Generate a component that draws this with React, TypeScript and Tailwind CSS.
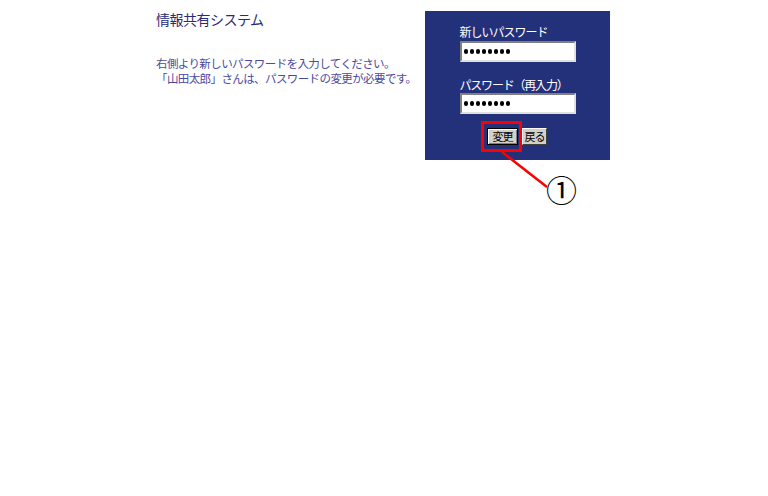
import React from 'react';

const font = "font-['Noto_Sans_CJK_JP','Noto_Sans',sans-serif]";

function PasswordBox() {
  return (
    <div className="flex h-[21px] w-[116px] items-center gap-[1.5px] border-2 border-t-[#808080] border-l-[#808080] border-r-[#e0e0e0] border-b-[#e0e0e0] bg-white pl-[2px]">
      {[0, 1, 2, 3, 4, 5, 6, 7].map(i => (
        <span key={i} className="h-[4.5px] w-[4.5px] rounded-full bg-black" />
      ))}
    </div>
  );
}

function Btn({ label, focused }: { label: string; focused?: boolean }) {
  return (
    <button
      className={
        'flex h-[17px] items-center justify-center bg-[#d4d0c8] text-[11px] leading-none tracking-[-1px] text-black ' +
        (focused
          ? 'w-[31px] border border-black shadow-[inset_1px_1px_0_#fff,inset_-1px_-1px_0_#808080]'
          : 'w-[25px] border border-t-white border-l-white border-r-[#404040] border-b-[#404040]')
      }
    >
      {label}
    </button>
  );
}

export default function App() {
  return (
    <div className={`relative min-h-[496px] w-full bg-white ${font}`}>
      <div className="flex pl-[156px] pt-[11px]">
        <div className="w-[269px]">
          <h1 className="text-[14px] leading-[16px] tracking-[-0.5px] text-[#2a2a78]">情報共有システム</h1>
          <p className="mt-[29px] text-[11.5px] leading-[15px] tracking-[-0.6px] text-[#4a4aa0]">
            右側より新しいパスワードを入力してください。
            <br />
            「山田太郎」さんは、パスワードの変更が必要です。
          </p>
        </div>

        <div className="flex h-[149px] w-[185px] flex-col items-center bg-[#23317b] pt-[13px]">
          <div className="w-[116px]">
            <label className="block text-[12px] leading-[15px] tracking-[-1px] text-white">新しいパスワード</label>
            <div className="mt-[2px]">
              <PasswordBox />
            </div>
            <label className="mt-[15px] block text-[12px] leading-[15px] tracking-[-1.2px] text-white">パスワード（再入力）</label>
            <div className="mt-[1px]">
              <PasswordBox />
            </div>
          </div>
          <div className="mt-[14px] ml-[-1px] flex gap-[4px]">
            <Btn label="変更" focused />
            <Btn label="戻る" />
          </div>
        </div>
      </div>

      {/* annotation overlay */}
      <div className="absolute left-[481px] top-[121px] h-[31px] w-[41px] border-[3px] border-[#ff0000]" />
      <svg className="absolute left-0 top-0" width="768" height="496" viewBox="0 0 768 496">
        <line x1="502" y1="152" x2="547" y2="187" stroke="#ff0000" strokeWidth="2.5" />
      </svg>
      <div className="absolute left-[546px] top-[173px] text-[31px] leading-[31px] text-black">①</div>
    </div>
  );
}
